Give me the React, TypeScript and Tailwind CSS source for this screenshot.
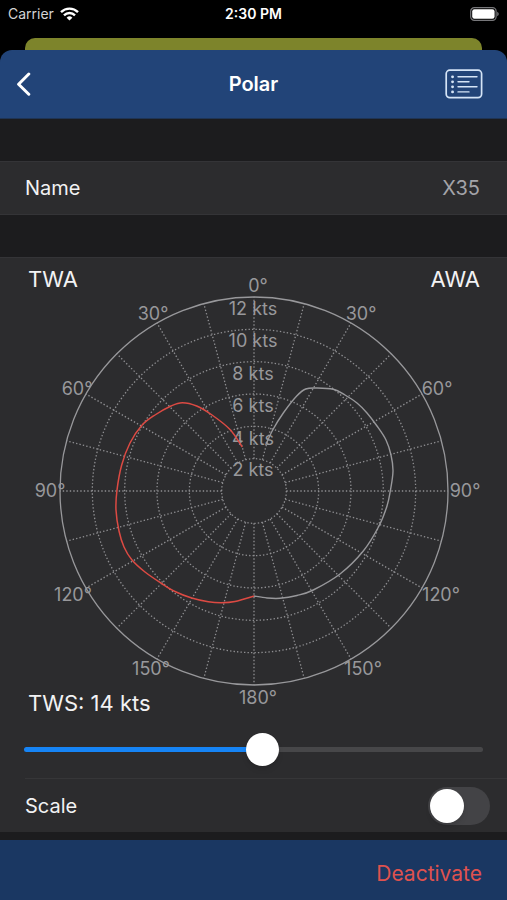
import * as React from "react";

type Point = [number, number];

const CX = 254;
const CY = 233;
const RADIUS = 194;
const RING_STEP = RADIUS / 6;

const RINGS = [1, 2, 3, 4, 5];
const SPOKES = Array.from({ length: 24 }, (_, i) => i * 15);

const SPEED_LABELS = [
  { text: "12 kts", y: 57 },
  { text: "10 kts", y: 89 },
  { text: "8 kts", y: 122 },
  { text: "6 kts", y: 154 },
  { text: "4 kts", y: 187 },
  { text: "2 kts", y: 218 },
];

const ANGLE_LABELS = [
  { text: "0°", x: 258, y: 34 },
  { text: "30°", x: 153, y: 62 },
  { text: "30°", x: 361, y: 62 },
  { text: "60°", x: 77, y: 137 },
  { text: "60°", x: 437, y: 137 },
  { text: "90°", x: 50, y: 239 },
  { text: "90°", x: 465, y: 239 },
  { text: "120°", x: 73, y: 343 },
  { text: "120°", x: 441, y: 343 },
  { text: "150°", x: 151, y: 417 },
  { text: "150°", x: 363, y: 417 },
  { text: "180°", x: 258, y: 446 },
];

const TWA_POINTS: Point[] = [
  [242.3, 189], [230, 171.5], [212, 157], [196.7, 148], [182.3, 144.7],
  [171, 148], [155, 157], [141.7, 167.5], [130, 185], [121.7, 207],
  [117, 232], [116, 252], [119, 273], [124, 289], [132, 302], [145, 314],
  [161.7, 325.5], [175, 333.5], [191.7, 340], [208.3, 343.7], [221.7, 344.7],
  [235, 343.5], [254, 338],
];

const AWA_POINTS: Point[] = [
  [265.7, 187], [272.7, 172], [283.3, 155], [296.7, 138], [305.7, 131],
  [317, 130], [333.3, 131.3], [345, 137], [357, 145], [367, 155], [377, 168],
  [386, 182], [391, 197], [393, 213], [390.5, 232], [387, 248], [379, 268],
  [363.3, 293], [340, 316], [313.3, 332], [297, 337.5], [280, 340.3],
  [267, 340], [254, 338],
];

// Catmull-Rom spline through every point
function smoothPath(points: Point[]) {
  let d = `M${points[0][0]} ${points[0][1]}`;
  for (let i = 0; i < points.length - 1; i++) {
    const p0 = points[i - 1] ?? points[i];
    const p1 = points[i];
    const p2 = points[i + 1];
    const p3 = points[i + 2] ?? p2;
    d += ` C${p1[0] + (p2[0] - p0[0]) / 6} ${p1[1] + (p2[1] - p0[1]) / 6}`;
    d += ` ${p2[0] - (p3[0] - p1[0]) / 6} ${p2[1] - (p3[1] - p1[1]) / 6}`;
    d += ` ${p2[0]} ${p2[1]}`;
  }
  return d;
}

function onCircle(angle: number, r: number): Point {
  const rad = (angle * Math.PI) / 180;
  return [CX + r * Math.sin(rad), CY - r * Math.cos(rad)];
}

function PolarChart() {
  return (
    <svg viewBox="0 0 507 462" className="col-start-1 row-start-1 block w-full" role="img" aria-label="Polar diagram">
      <g fill="none" stroke="#8e8e91" strokeWidth="1.3" strokeDasharray="1.4 2.1">
        {RINGS.map((n) => (
          <circle key={n} cx={CX} cy={CY} r={RING_STEP * n} />
        ))}
        {SPOKES.map((angle) => {
          const [x1, y1] = onCircle(angle, RING_STEP);
          const [x2, y2] = onCircle(angle, RADIUS);
          return <line key={angle} x1={x1} y1={y1} x2={x2} y2={y2} />;
        })}
      </g>
      <circle cx={CX} cy={CY} r={RADIUS} fill="none" stroke="#98989b" strokeWidth="1.3" />
      <g fill="#98989b" fontSize="18" textAnchor="middle">
        {SPEED_LABELS.map((l) => (
          <text key={l.text} x={253} y={l.y}>
            {l.text}
          </text>
        ))}
        {ANGLE_LABELS.map((l) => (
          <text key={`${l.text}-${l.x}`} x={l.x} y={l.y}>
            {l.text}
          </text>
        ))}
      </g>
      <path d={smoothPath(AWA_POINTS)} fill="none" stroke="#98989b" strokeWidth="1.4" />
      <path d={smoothPath(TWA_POINTS)} fill="none" stroke="#dc4a43" strokeWidth="1.5" />
    </svg>
  );
}

function StatusBar() {
  return (
    <div className="grid h-7 grid-cols-3 items-center px-2 text-sm text-white">
      <div className="flex items-center gap-1.5 text-[#d4d4d4]">
        Carrier
        <svg width="19" height="14" viewBox="0 0 19 14" fill="none" stroke="#fff" strokeWidth="2.4" aria-hidden="true">
          <path d="M1 5.1a12.2 12.2 0 0 1 17 0" />
          <path d="M4 8.3a7.8 7.8 0 0 1 11 0" />
          <path d="M9.5 13.6 6.6 10.7a4.1 4.1 0 0 1 5.8 0z" fill="#fff" stroke="none" />
        </svg>
      </div>
      <div className="text-center font-semibold">2:30 PM</div>
      <svg className="justify-self-end" width="29" height="14" viewBox="0 0 29 14" aria-hidden="true">
        <rect x="0.7" y="0.7" width="25.4" height="12.6" rx="3.6" fill="none" stroke="#77777a" strokeWidth="1.2" />
        <rect x="2.2" y="2.2" width="22.4" height="9.6" rx="2.2" fill="#fff" />
        <path d="M27.2 4.8v4.4c2-.8 2-3.6 0-4.4z" fill="#77777a" />
      </svg>
    </div>
  );
}

function NavBar() {
  return (
    <header className="grid h-[69px] grid-cols-3 items-center rounded-t-xl border-b border-[#1f3454] bg-[#224478] px-4 text-white">
      <button type="button" aria-label="Back" className="justify-self-start">
        <svg width="16" height="24" viewBox="0 0 16 24" fill="none" stroke="#fff" strokeWidth="3" strokeLinecap="round" strokeLinejoin="round" aria-hidden="true">
          <path d="M12.8 2 2.6 12.2l10.2 10" />
        </svg>
      </button>
      <h1 className="text-center text-xl font-semibold">Polar</h1>
      <button type="button" aria-label="List" className="mr-2 justify-self-end">
        <svg width="38" height="30" viewBox="0 0 38 30" fill="none" stroke="#d5e4f6" strokeLinecap="round" aria-hidden="true">
          <rect x="1.2" y="1.2" width="35.4" height="27.4" rx="3.6" strokeWidth="1.7" />
          <path d="M13 7.8h19M13 12.8h11M13 17.8h19M13 22.9h11" strokeWidth="1.4" />
          <path d="M7.5 7.8h.1M7.5 12.8h.1M7.5 17.8h.1M7.5 22.9h.1" strokeWidth="2.8" />
        </svg>
      </button>
    </header>
  );
}

export default function App() {
  const [tws, setTws] = React.useState(14);
  const [scale, setScale] = React.useState(false);

  const min = 1;
  const max = 26;
  const percent = ((tws - min) / (max - min)) * 100;

  return (
    <div className="flex min-h-screen flex-col bg-black font-['Inter','Liberation_Sans',sans-serif] text-[#f2f2f3]">
      <StatusBar />
      <div className="mx-[25px] mt-2.5 h-3 rounded-t-[10px] bg-[#7d842b]" />
      <NavBar />

      <main className="flex grow flex-col bg-[#1c1c1e] pt-[42px]">
        <div className="flex h-[54px] items-center justify-between border-y border-[#343437] bg-[#2c2c2e] pl-[25px] pr-[27px] text-xl">
          <span>Name</span>
          <span className="text-[#a3a3a8]">X35</span>
        </div>

        <section className="mt-[42px] border-t border-[#343437] bg-[#2c2c2e]">
          <div className="grid">
            <PolarChart />
            <div className="col-start-1 row-start-1 flex flex-col justify-between pb-px pl-7 pr-[27px] pt-[5px] text-[22px] leading-8">
              <div className="flex justify-between">
                <span>TWA</span>
                <span>AWA</span>
              </div>
              <label htmlFor="tws">TWS: {tws} kts</label>
            </div>
          </div>
          <div className="flex h-[58px] items-center px-6">
            <input
              id="tws"
              type="range"
              min={min}
              max={max}
              value={tws}
              onChange={(e) => setTws(Number(e.target.value))}
              className="h-[5px] w-full appearance-none rounded-full [&::-webkit-slider-thumb]:size-[33px] [&::-webkit-slider-thumb]:appearance-none [&::-webkit-slider-thumb]:rounded-full [&::-webkit-slider-thumb]:bg-white [&::-webkit-slider-thumb]:shadow-md"
              style={{ background: `linear-gradient(to right, #1684f5 ${percent}%, #474749 ${percent}%)` }}
            />
          </div>
          <div className="ml-[25px] flex h-[54px] items-center justify-between border-t border-[#363638] pr-[17px] text-xl">
            <label htmlFor="scale">Scale</label>
            <input
              id="scale"
              type="checkbox"
              role="switch"
              checked={scale}
              onChange={(e) => setScale(e.target.checked)}
              className="flex h-[38px] w-[62px] appearance-none items-center rounded-full bg-[#434346] px-0.5 before:size-[34px] before:rounded-full before:bg-white before:shadow-md checked:justify-end checked:bg-[#30d158]"
            />
          </div>
        </section>
      </main>

      <footer className="flex h-[60px] items-center justify-end bg-[#1a3762] px-[25px] pt-2">
        <button type="button" className="text-[21px] text-[#df524f]">
          Deactivate
        </button>
      </footer>
    </div>
  );
}
